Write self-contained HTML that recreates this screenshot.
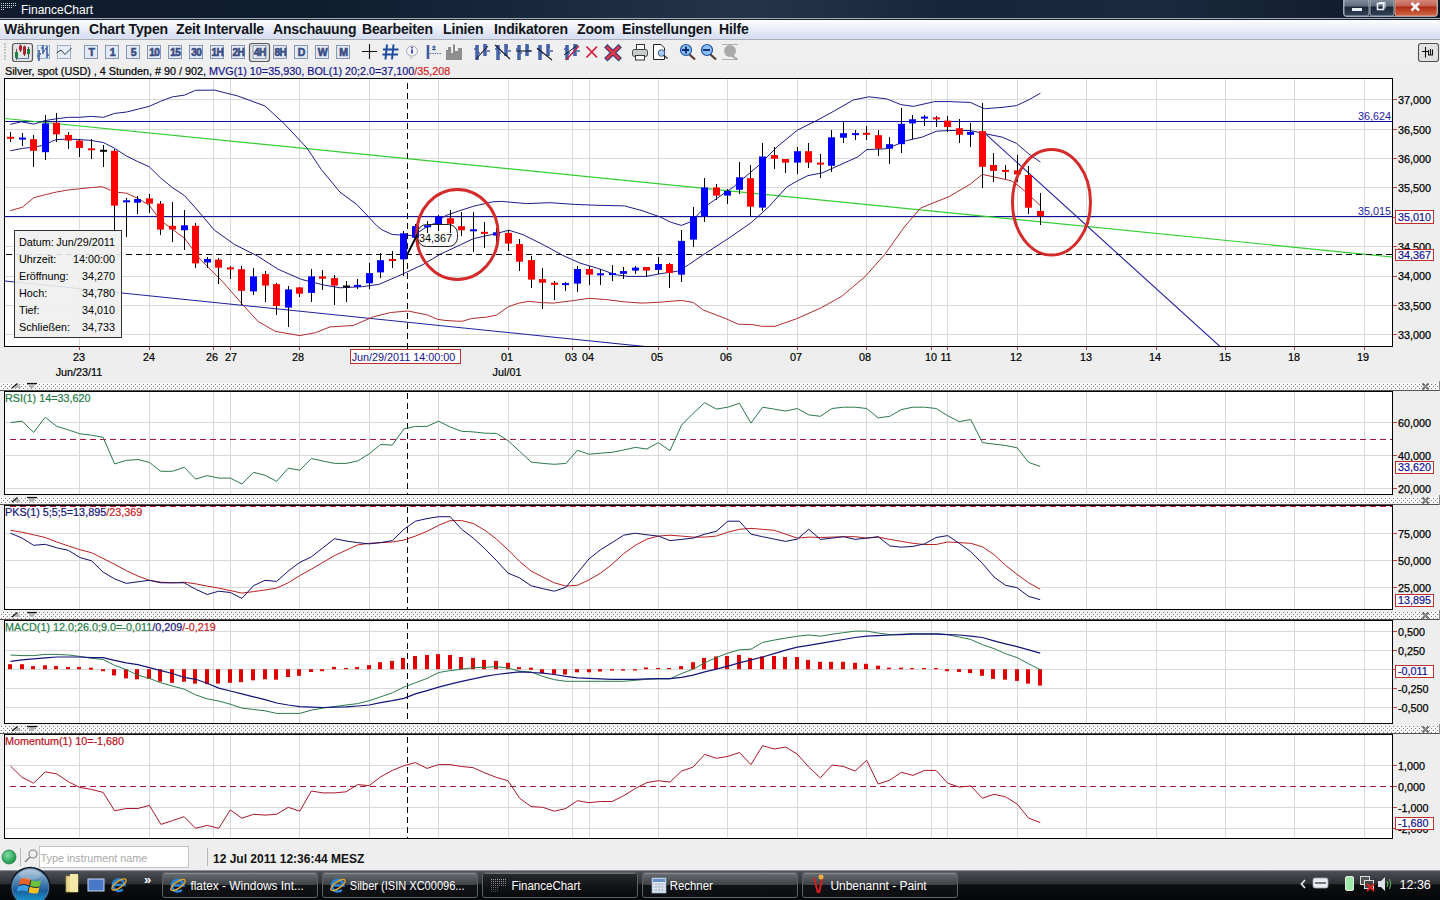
<!DOCTYPE html>
<html><head><meta charset="utf-8"><title>FinanceChart</title>
<style>
html,body{margin:0;padding:0;width:1440px;height:900px;overflow:hidden;background:#eeeeee;font-family:"Liberation Sans",sans-serif;}
.abs{position:absolute;}
#title{left:0;top:0;width:1440px;height:18px;background:linear-gradient(90deg,#0f1c2e 0%,#0f1d30 22%,#1a2a3f 40%,#24344a 52%,#16263a 66%,#1a2a3e 80%,#0d1828 100%);}
#title .t{position:absolute;left:21px;top:3px;color:#fff;font-size:12px;}
#tline{left:0;top:18px;width:1440px;height:1px;background:#a2aab4;border-bottom:1px solid #1a2230;}
#menu{left:0;top:20px;width:1440px;height:19px;background:linear-gradient(180deg,#fbfcfe 0%,#eef1f8 40%,#dde3f4 75%,#d8def2 100%);border-bottom:1px solid #a8adb6;}
#menu span{position:absolute;top:0.5px;font-size:14px;letter-spacing:-0.15px;font-weight:bold;color:#101418;}
#tool{left:0;top:40px;width:1440px;height:24px;background:#efefef;}
#info{left:5px;top:65px;font-size:10.8px;color:#000;white-space:nowrap;-webkit-text-stroke:0.2px;}
#status{left:0;top:839px;width:1440px;height:31px;background:#eeeeee;}
#taskbar{left:0;top:870px;width:1440px;height:30px;background:linear-gradient(180deg,#5a5e63 0%,#3a3d41 8%,#25282c 45%,#07080a 55%,#050608 100%);}
</style></head><body>
<div id="title" class="abs"><span class="t">FinanceChart</span></div>
<div id="tline" class="abs"></div>
<div id="menu" class="abs">
<span style="left:4px">Währungen</span><span style="left:89px">Chart Typen</span><span style="left:176px">Zeit Intervalle</span><span style="left:273px">Anschauung</span><span style="left:362px">Bearbeiten</span><span style="left:443px">Linien</span><span style="left:494px">Indikatoren</span><span style="left:577px">Zoom</span><span style="left:622px">Einstellungen</span><span style="left:719px">Hilfe</span>
</div>
<div id="tool" class="abs"></div>
<div id="info" class="abs">Silver, spot (USD) , 4 Stunden, # 90 / 902, <span style="color:#14148a">MVG(1) 10=35,930, BOL(1) 20;2.0=37,100</span><span style="color:#d02020">/35,208</span></div>
<div id="status" class="abs"></div>
<div id="taskbar" class="abs"></div>
<svg width="1440" height="900" viewBox="0 0 1440 900" style="position:absolute;left:0;top:0" font-family='"Liberation Sans", sans-serif'>
<defs><pattern id="dots" x="0" y="0" width="4" height="4" patternUnits="userSpaceOnUse"><rect width="4" height="4" fill="#f7f7f7"/><rect x="3" y="0" width="1" height="1" fill="#7a7a7a"/><rect x="1" y="2" width="1" height="1" fill="#7a7a7a"/></pattern><clipPath id="cmain"><rect x="5" y="79" width="1387" height="267"/></clipPath><clipPath id="crsi"><rect x="5" y="392" width="1387" height="102"/></clipPath><clipPath id="cpks"><rect x="5" y="506" width="1387" height="103"/></clipPath><clipPath id="cmacd"><rect x="5" y="621" width="1387" height="102"/></clipPath><clipPath id="cmom"><rect x="5" y="735" width="1387" height="103"/></clipPath></defs>
<rect x="4" y="78" width="1389" height="269" fill="#fff"/>
<path d="M79.5 79 V346 M149.5 79 V346 M213.5 79 V346 M230.5 79 V346 M299.5 79 V346 M369.5 79 V346 M438.5 79 V346 M508.5 79 V346 M572.5 79 V346 M589.5 79 V346 M658.5 79 V346 M727.5 79 V346 M797.5 79 V346 M866.5 79 V346 M931.5 79 V346 M947.5 79 V346 M1017.5 79 V346 M1086.5 79 V346 M1156.5 79 V346 M1225.5 79 V346 M1294.5 79 V346 M1364.5 79 V346 M5 99.5 H1392 M5 129.5 H1392 M5 158.5 H1392 M5 187.5 H1392 M5 217.5 H1392 M5 246.5 H1392 M5 276.5 H1392 M5 305.5 H1392 M5 334.5 H1392" stroke="#d9d9d9" stroke-width="1" fill="none" shape-rendering="crispEdges"/>
<g clip-path="url(#cmain)">
<path d="M5 121.5 H1392 M5 216.5 H1392" stroke="#1010a0" stroke-width="1.2" shape-rendering="crispEdges"/>
<path d="M5 118.5 L1392 257" stroke="#30d030" stroke-width="1.2" fill="none"/>
<path d="M5 281 L645 346.5" stroke="#2020a0" stroke-width="1.1" fill="none"/>
<path d="M982.5 131.2 L1220 346.5" stroke="#2020a0" stroke-width="1.1" fill="none"/>
<polyline points="10.3,124.4 21.3,121.8 33.8,124.1 45.3,120.5 56.5,118.8 68.4,117.3 79.5,117.3 91.2,116.4 103.5,117.3 114.7,113.4 126.6,112.0 137.4,109.3 149.3,106.3 160.5,101.3 172.4,96.9 184.5,95.1 195.6,90.3 214.4,90.1 237.5,95.9 265.0,106.0 283.8,123.3 306.9,147.9 321.3,169.5 340.0,192.2 356.7,204.4 367.8,216.1 376.7,225.6 382.2,230.0 392.2,234.4 400.0,235.0 413.3,235.6 423.3,228.9 434.4,223.3 445.6,215.6 460.0,210.6 473.3,206.3 492.9,201.8 501.4,201.4 526.7,203.6 549.8,202.7 574.7,204.4 597.8,205.3 624.4,205.9 642.2,210.7 660.0,216.9 670.7,222.2 681.3,225.4 692.0,221.3 704.9,206.7 733.3,187.1 758.2,165.8 777.8,146.2 797.3,130.2 816.9,120.4 834.7,110.7 853.3,100.0 868.9,96.8 886.7,98.9 900.9,104.6 913.3,106.4 934.7,101.6 948.9,101.6 970.2,102.4 984.4,108.7 1002.2,107.4 1016.4,105.6 1028.9,99.8 1040.4,93.2" fill="none" stroke="#1c1c88" stroke-width="1"/>
<polyline points="10.3,150.8 22.6,148.4 33.4,147.2 45.3,144.9 51.6,141.3 56.5,139.6 68.4,139.0 79.5,139.6 91.2,140.4 103.5,142.6 114.7,148.4 126.6,156.1 137.4,161.4 149.3,166.8 160.5,177.8 172.4,187.6 184.5,195.6 195.6,208.0 214.4,230.2 234.7,244.6 257.8,256.2 278.0,269.2 301.1,279.3 324.2,285.1 340.0,287.8 362.2,286.7 378.9,284.4 395.6,277.2 406.7,272.2 423.3,264.4 440.0,254.4 460.0,245.0 473.3,238.7 495.3,233.8 508.9,230.2 523.1,234.7 544.4,245.3 562.2,255.1 580.0,263.1 597.8,268.4 615.6,274.7 628.0,276.4 645.8,276.4 660.0,273.8 677.8,271.1 688.4,264.9 700.0,256.9 728.0,238.7 751.1,222.7 768.9,206.7 786.7,187.1 797.3,180.9 808.0,175.6 822.2,172.9 840.0,164.9 857.8,156.9 866.7,149.6 886.7,148.7 906.2,140.7 922.2,137.1 936.4,131.2 948.9,130.5 970.2,130.5 984.4,133.6 1002.2,137.1 1016.4,143.3 1028.9,154.0 1040.4,162.0" fill="none" stroke="#1c1c88" stroke-width="1"/>
<polyline points="10.3,210.7 22.6,207.1 33.8,197.7 45.3,194.7 56.5,192.0 68.4,189.9 79.5,188.8 91.2,187.6 102.2,186.7 114.7,192.0 126.6,193.2 137.4,198.2 149.3,205.3 160.5,220.4 172.4,229.3 184.5,238.2 200.0,259.1 223.1,282.2 243.3,305.3 257.8,321.2 275.1,331.3 299.6,335.6 315.5,332.7 330.0,326.9 353.1,325.5 373.3,316.8 390.6,312.5 408.0,311.0 427.5,315.0 437.5,319.3 445.0,320.4 456.7,321.2 462.5,321.2 471.7,318.5 486.7,317.1 496.7,315.0 508.3,306.7 518.3,303.3 528.3,301.3 540.0,302.5 553.3,303.1 574.7,300.4 588.9,298.3 606.7,299.6 624.4,301.9 642.2,303.1 660.0,302.2 681.3,300.4 693.3,302.5 703.3,310.0 725.0,318.3 738.3,324.2 753.3,324.7 761.7,326.3 775.0,326.3 796.7,318.7 821.7,307.5 841.7,296.3 865.0,276.7 885.0,254.2 904.4,226.9 920.4,208.2 931.1,203.8 948.9,196.7 970.2,184.2 982.3,174.4 1011.1,180.7 1020.0,186.9 1040.4,205.6" fill="none" stroke="#b02c2c" stroke-width="1"/>
<path d="M407.5 83 V346 M6 254.5 H1392" stroke="#000" stroke-width="1" stroke-dasharray="6,4" shape-rendering="crispEdges"/>
<path d="M10.5 132.0 V142.0 M22.5 133.4 V146.4 M33.5 134.9 V167.2 M45.5 114.7 V160.3 M56.5 113.2 V142.0 M68.5 132.0 V149.3 M79.5 139.2 V157.4 M91.5 139.2 V159.4 M103.5 145.0 V166.6 M114.5 149.3 V231.6 M126.5 197.8 V237.4 M137.5 195.5 V214.3 M149.5 194.0 V213.4 M160.5 201.3 V234.5 M172.5 201.9 V242.3 M184.5 210.0 V250.4 M195.5 223.0 V268.3 M207.5 256.7 V267.7 M218.5 257.6 V284.0 M230.5 266.0 V279.3 M241.5 266.3 V305.3 M253.5 267.7 V295.2 M265.5 271.2 V301.8 M276.5 282.7 V315.4 M288.5 285.6 V326.9 M299.5 286.5 V297.2 M311.5 269.2 V301.8 M322.5 270.0 V290.3 M334.5 275.0 V304.7 M346.5 280.7 V301.8 M357.5 279.3 V289.4 M369.5 263.3 V288.9 M380.5 253.3 V277.8 M392.5 250.6 V267.8 M403.5 230.6 V275.6 M415.5 224.0 V238.0 M427.5 221.1 V232.8 M438.5 215.4 V231.3 M450.5 210.0 V232.8 M461.5 212.0 V235.6 M473.5 212.0 V251.5 M484.5 222.2 V248.4 M496.5 228.3 V243.5 M508.5 230.1 V250.8 M519.5 239.1 V270.6 M531.5 256.0 V287.6 M542.5 268.1 V309.3 M554.5 280.5 V299.6 M565.5 282.3 V290.7 M577.5 266.3 V291.6 M589.5 266.3 V285.3 M600.5 269.3 V285.3 M612.5 265.2 V280.9 M623.5 267.0 V278.8 M635.5 266.0 V274.0 M646.5 266.7 V277.3 M658.5 256.9 V274.1 M669.5 263.1 V287.6 M681.5 230.2 V281.8 M693.5 207.1 V246.8 M704.5 177.9 V221.8 M716.5 183.9 V199.9 M727.5 189.2 V204.0 M739.5 162.2 V193.9 M750.5 165.4 V216.4 M762.5 143.0 V210.6 M774.5 147.1 V169.0 M785.5 159.0 V172.9 M797.5 147.1 V173.8 M808.5 143.0 V167.6 M820.5 154.2 V178.2 M831.5 129.9 V172.0 M843.5 121.3 V142.7 M855.5 130.2 V139.5 M866.5 126.3 V139.5 M878.5 130.1 V155.6 M889.5 137.1 V163.8 M901.5 107.8 V152.6 M912.5 114.9 V138.9 M924.5 115.2 V125.6 M936.5 115.8 V127.3 M947.5 115.8 V131.8 M959.5 118.8 V143.0 M970.5 122.9 V146.9 M982.5 102.8 V187.8 M993.5 153.1 V182.1 M1005.5 165.0 V178.9 M1017.5 154.9 V182.4 M1028.5 166.1 V214.4 M1040.5 192.8 V224.8" stroke="#000" stroke-width="1" shape-rendering="crispEdges"/>
<rect x="7" y="136.8" width="7" height="2" fill="#ff0000"/><rect x="19" y="137.6" width="7" height="2" fill="#0000ff"/><rect x="30" y="139.2" width="7" height="11.6" fill="#ff0000"/><rect x="42" y="123.3" width="7" height="28.9" fill="#0000ff"/><rect x="53" y="122.7" width="7" height="11.6" fill="#ff0000"/><rect x="65" y="134.9" width="7" height="5.7" fill="#ff0000"/><rect x="76" y="140.6" width="7" height="7.3" fill="#ff0000"/><rect x="88" y="148.3" width="7" height="2" fill="#ff0000"/><rect x="100" y="149.8" width="7" height="2" fill="#000000"/><rect x="111" y="150.8" width="7" height="54.8" fill="#ff0000"/><rect x="123" y="200.3" width="7" height="2" fill="#0000ff"/><rect x="134" y="199.0" width="7" height="3.7" fill="#0000ff"/><rect x="146" y="198.4" width="7" height="5.2" fill="#ff0000"/><rect x="157" y="203.6" width="7" height="26.0" fill="#ff0000"/><rect x="169" y="225.8" width="7" height="3.8" fill="#ff0000"/><rect x="181" y="225.3" width="7" height="4.9" fill="#0000ff"/><rect x="192" y="225.8" width="7" height="37.6" fill="#ff0000"/><rect x="204" y="259.0" width="7" height="3.5" fill="#0000ff"/><rect x="215" y="259.6" width="7" height="8.1" fill="#ff0000"/><rect x="227" y="267.4" width="7" height="2" fill="#ff0000"/><rect x="238" y="269.2" width="7" height="21.6" fill="#ff0000"/><rect x="250" y="276.4" width="7" height="15.0" fill="#0000ff"/><rect x="262" y="274.1" width="7" height="11.5" fill="#ff0000"/><rect x="273" y="284.2" width="7" height="21.9" fill="#ff0000"/><rect x="285" y="289.4" width="7" height="18.2" fill="#0000ff"/><rect x="296" y="287.4" width="7" height="6.3" fill="#ff0000"/><rect x="308" y="276.4" width="7" height="16.5" fill="#0000ff"/><rect x="319" y="276.4" width="7" height="2.3" fill="#ff0000"/><rect x="331" y="278.1" width="7" height="7.5" fill="#ff0000"/><rect x="343" y="285.5" width="7" height="2" fill="#000000"/><rect x="354" y="284.9" width="7" height="2" fill="#0000ff"/><rect x="366" y="273.1" width="7" height="10.2" fill="#0000ff"/><rect x="377" y="260.2" width="7" height="12.2" fill="#0000ff"/><rect x="389" y="259.0" width="7" height="2" fill="#ff0000"/><rect x="400" y="233.3" width="7" height="26.1" fill="#0000ff"/><rect x="412" y="226.1" width="7" height="11.7" fill="#0000ff"/><rect x="424" y="225.3" width="7" height="2" fill="#0000ff"/><rect x="435" y="216.5" width="7" height="8.5" fill="#0000ff"/><rect x="447" y="218.2" width="7" height="5.6" fill="#ff0000"/><rect x="458" y="226.2" width="7" height="4.1" fill="#ff0000"/><rect x="470" y="229.3" width="7" height="2" fill="#0000ff"/><rect x="481" y="231.8" width="7" height="2" fill="#ff0000"/><rect x="493" y="232.3" width="7" height="3.3" fill="#0000ff"/><rect x="505" y="232.9" width="7" height="10.7" fill="#ff0000"/><rect x="516" y="244.1" width="7" height="17.6" fill="#ff0000"/><rect x="528" y="260.1" width="7" height="19.5" fill="#ff0000"/><rect x="539" y="279.1" width="7" height="3.6" fill="#ff0000"/><rect x="551" y="282.7" width="7" height="2.1" fill="#ff0000"/><rect x="562" y="283.1" width="7" height="2" fill="#0000ff"/><rect x="574" y="269.0" width="7" height="14.6" fill="#0000ff"/><rect x="586" y="269.0" width="7" height="5.7" fill="#ff0000"/><rect x="597" y="273.3" width="7" height="2" fill="#0000ff"/><rect x="609" y="273.1" width="7" height="2" fill="#0000ff"/><rect x="620" y="271.1" width="7" height="2.7" fill="#0000ff"/><rect x="632" y="267.6" width="7" height="3.0" fill="#0000ff"/><rect x="643" y="267.0" width="7" height="3.6" fill="#ff0000"/><rect x="655" y="264.0" width="7" height="5.9" fill="#0000ff"/><rect x="666" y="264.0" width="7" height="8.9" fill="#ff0000"/><rect x="678" y="240.9" width="7" height="33.8" fill="#0000ff"/><rect x="690" y="216.5" width="7" height="23.1" fill="#0000ff"/><rect x="701" y="187.5" width="7" height="28.9" fill="#0000ff"/><rect x="713" y="187.5" width="7" height="8.1" fill="#ff0000"/><rect x="724" y="191.0" width="7" height="4.6" fill="#0000ff"/><rect x="736" y="177.3" width="7" height="12.5" fill="#0000ff"/><rect x="747" y="178.2" width="7" height="28.5" fill="#ff0000"/><rect x="759" y="156.5" width="7" height="51.1" fill="#0000ff"/><rect x="771" y="155.1" width="7" height="3.6" fill="#ff0000"/><rect x="782" y="159.0" width="7" height="3.6" fill="#ff0000"/><rect x="794" y="151.2" width="7" height="11.4" fill="#0000ff"/><rect x="805" y="151.2" width="7" height="11.4" fill="#ff0000"/><rect x="817" y="162.6" width="7" height="2" fill="#ff0000"/><rect x="828" y="137.3" width="7" height="28.5" fill="#0000ff"/><rect x="840" y="133.2" width="7" height="4.5" fill="#0000ff"/><rect x="852" y="133.1" width="7" height="2" fill="#0000ff"/><rect x="863" y="132.8" width="7" height="2" fill="#ff0000"/><rect x="875" y="135.2" width="7" height="13.5" fill="#ff0000"/><rect x="886" y="144.2" width="7" height="4.5" fill="#0000ff"/><rect x="898" y="123.8" width="7" height="20.4" fill="#0000ff"/><rect x="909" y="119.3" width="7" height="4.1" fill="#0000ff"/><rect x="921" y="116.6" width="7" height="2" fill="#0000ff"/><rect x="933" y="117.4" width="7" height="2" fill="#ff0000"/><rect x="944" y="120.6" width="7" height="6.4" fill="#ff0000"/><rect x="956" y="128.2" width="7" height="6.6" fill="#ff0000"/><rect x="967" y="131.8" width="7" height="3.0" fill="#0000ff"/><rect x="979" y="131.2" width="7" height="35.6" fill="#ff0000"/><rect x="990" y="165.0" width="7" height="5.9" fill="#ff0000"/><rect x="1002" y="169.9" width="7" height="2" fill="#ff0000"/><rect x="1014" y="170.4" width="7" height="4.0" fill="#ff0000"/><rect x="1025" y="175.0" width="7" height="32.7" fill="#ff0000"/><rect x="1037" y="210.9" width="7" height="5.3" fill="#ff0000"/>
<ellipse cx="457.4" cy="234.4" rx="40.8" ry="45" fill="none" stroke="#d42a2a" stroke-width="3"/>
<ellipse cx="1051.5" cy="202.2" rx="39" ry="52.8" fill="none" stroke="#d42a2a" stroke-width="3"/>
<path d="M407.5 254 L417.5 234" stroke="#000" stroke-width="1.8"/>
<rect x="417.5" y="224.5" width="40" height="22" rx="9" fill="none" stroke="#222" stroke-width="1"/>
<text x="419" y="242" font-size="10.8" fill="#000">34,367</text>
<text x="1391" y="120" font-size="10.8" fill="#1a1aa0" text-anchor="end">36,624</text>
<text x="1391" y="215" font-size="10.8" fill="#1a1aa0" text-anchor="end">35,015</text>
<rect x="14.5" y="230.5" width="107" height="107" fill="#f0f0f0" fill-opacity="0.9" stroke="#333" stroke-width="1" shape-rendering="crispEdges"/>
<text x="19" y="245.5" font-size="10.8" fill="#000">Datum:</text>
<text x="115" y="245.5" font-size="10.8" fill="#000" text-anchor="end">Jun/29/2011</text>
<text x="19" y="262.5" font-size="10.8" fill="#000">Uhrzeit:</text>
<text x="115" y="262.5" font-size="10.8" fill="#000" text-anchor="end">14:00:00</text>
<text x="19" y="279.5" font-size="10.8" fill="#000">Eröffnung:</text>
<text x="115" y="279.5" font-size="10.8" fill="#000" text-anchor="end">34,270</text>
<text x="19" y="296.5" font-size="10.8" fill="#000">Hoch:</text>
<text x="115" y="296.5" font-size="10.8" fill="#000" text-anchor="end">34,780</text>
<text x="19" y="313.5" font-size="10.8" fill="#000">Tief:</text>
<text x="115" y="313.5" font-size="10.8" fill="#000" text-anchor="end">34,010</text>
<text x="19" y="330.5" font-size="10.8" fill="#000">Schließen:</text>
<text x="115" y="330.5" font-size="10.8" fill="#000" text-anchor="end">34,733</text>
</g>
<rect x="4.5" y="78.5" width="1388" height="268" fill="none" stroke="#000" stroke-width="1" shape-rendering="crispEdges"/>
<path d="M1393 99.5 h4 M1393 129.5 h4 M1393 158.5 h4 M1393 187.5 h4 M1393 217.5 h4 M1393 246.5 h4 M1393 276.5 h4 M1393 305.5 h4 M1393 334.5 h4" stroke="#c04040" stroke-width="1" shape-rendering="crispEdges"/>
<text x="1398" y="104.2" font-size="10.8" fill="#000" stroke="#000" stroke-width="0.25">37,000</text>
<text x="1398" y="133.6" font-size="10.8" fill="#000" stroke="#000" stroke-width="0.25">36,500</text>
<text x="1398" y="162.9" font-size="10.8" fill="#000" stroke="#000" stroke-width="0.25">36,000</text>
<text x="1398" y="192.2" font-size="10.8" fill="#000" stroke="#000" stroke-width="0.25">35,500</text>
<text x="1398" y="251.0" font-size="10.8" fill="#000" stroke="#000" stroke-width="0.25">34,500</text>
<text x="1398" y="280.3" font-size="10.8" fill="#000" stroke="#000" stroke-width="0.25">34,000</text>
<text x="1398" y="309.7" font-size="10.8" fill="#000" stroke="#000" stroke-width="0.25">33,500</text>
<text x="1398" y="339.0" font-size="10.8" fill="#000" stroke="#000" stroke-width="0.25">33,000</text>
<rect x="1395.5" y="210.5" width="38" height="12.5" fill="#fff" stroke="#c03030" stroke-width="1" shape-rendering="crispEdges"/>
<text x="1398" y="220.6" font-size="10.8" fill="#101090" stroke="#101090" stroke-width="0.2">35,010</text>
<rect x="1395.5" y="249.0" width="38" height="11.5" fill="#fff" stroke="#c03030" stroke-width="1" shape-rendering="crispEdges"/>
<text x="1398" y="258.6" font-size="10.8" fill="#101090" stroke="#101090" stroke-width="0.2">34,367</text>
<path d="M79.5 347 v3 M149.5 347 v3 M213.5 347 v3 M230.5 347 v3 M299.5 347 v3 M369.5 347 v3 M438.5 347 v3 M508.5 347 v3 M572.5 347 v3 M589.5 347 v3 M658.5 347 v3 M727.5 347 v3 M797.5 347 v3 M866.5 347 v3 M931.5 347 v3 M947.5 347 v3 M1017.5 347 v3 M1086.5 347 v3 M1156.5 347 v3 M1225.5 347 v3 M1294.5 347 v3 M1364.5 347 v3" stroke="#a04040" stroke-width="1" shape-rendering="crispEdges"/>
<path d="M407.5 347 v3" stroke="#000" stroke-width="1"/>
<text x="79.0" y="360.8" font-size="10.8" fill="#000" stroke="#000" stroke-width="0.2" text-anchor="middle">23</text>
<text x="149.0" y="360.8" font-size="10.8" fill="#000" stroke="#000" stroke-width="0.2" text-anchor="middle">24</text>
<text x="212.0" y="360.8" font-size="10.8" fill="#000" stroke="#000" stroke-width="0.2" text-anchor="middle">26</text>
<text x="231.0" y="360.8" font-size="10.8" fill="#000" stroke="#000" stroke-width="0.2" text-anchor="middle">27</text>
<text x="298.0" y="360.8" font-size="10.8" fill="#000" stroke="#000" stroke-width="0.2" text-anchor="middle">28</text>
<text x="507.0" y="360.8" font-size="10.8" fill="#000" stroke="#000" stroke-width="0.2" text-anchor="middle">01</text>
<text x="571.0" y="360.8" font-size="10.8" fill="#000" stroke="#000" stroke-width="0.2" text-anchor="middle">03</text>
<text x="588.0" y="360.8" font-size="10.8" fill="#000" stroke="#000" stroke-width="0.2" text-anchor="middle">04</text>
<text x="657.0" y="360.8" font-size="10.8" fill="#000" stroke="#000" stroke-width="0.2" text-anchor="middle">05</text>
<text x="726.0" y="360.8" font-size="10.8" fill="#000" stroke="#000" stroke-width="0.2" text-anchor="middle">06</text>
<text x="796.0" y="360.8" font-size="10.8" fill="#000" stroke="#000" stroke-width="0.2" text-anchor="middle">07</text>
<text x="865.0" y="360.8" font-size="10.8" fill="#000" stroke="#000" stroke-width="0.2" text-anchor="middle">08</text>
<text x="931.0" y="360.8" font-size="10.8" fill="#000" stroke="#000" stroke-width="0.2" text-anchor="middle">10</text>
<text x="946.0" y="360.8" font-size="10.8" fill="#000" stroke="#000" stroke-width="0.2" text-anchor="middle">11</text>
<text x="1016.0" y="360.8" font-size="10.8" fill="#000" stroke="#000" stroke-width="0.2" text-anchor="middle">12</text>
<text x="1086.0" y="360.8" font-size="10.8" fill="#000" stroke="#000" stroke-width="0.2" text-anchor="middle">13</text>
<text x="1155.0" y="360.8" font-size="10.8" fill="#000" stroke="#000" stroke-width="0.2" text-anchor="middle">14</text>
<text x="1225.0" y="360.8" font-size="10.8" fill="#000" stroke="#000" stroke-width="0.2" text-anchor="middle">15</text>
<text x="1294.0" y="360.8" font-size="10.8" fill="#000" stroke="#000" stroke-width="0.2" text-anchor="middle">18</text>
<text x="1363.0" y="360.8" font-size="10.8" fill="#000" stroke="#000" stroke-width="0.2" text-anchor="middle">19</text>
<text x="79" y="375.8" font-size="10.8" fill="#000" stroke="#000" stroke-width="0.2" text-anchor="middle">Jun/23/11</text>
<text x="507" y="375.8" font-size="10.8" fill="#000" stroke="#000" stroke-width="0.2" text-anchor="middle">Jul/01</text>
<rect x="350.5" y="349.5" width="110" height="14" fill="#fff" stroke="#c03030" stroke-width="1"/>
<text x="403.5" y="361" font-size="10.8" fill="#14148a" text-anchor="middle">Jun/29/2011 14:00:00</text>
<rect x="0" y="383" width="1440" height="7" fill="url(#dots)"/>
<path d="M0 390.5 H1440" stroke="#5a5050" stroke-width="1" shape-rendering="crispEdges"/>
<path d="M14 388 L18 384 L21 388 Z" fill="#b4b4b4"/><path d="M12 388.0 L17.5 383.5" stroke="#111" stroke-width="1.2"/>
<path d="M28 384 H36 L33 388 H30 Z" fill="#b4b4b4"/><path d="M27 383.5 H37" stroke="#111" stroke-width="1.2"/>
<rect x="1422" y="383" width="7" height="7" fill="#f7f7f7"/><path d="M1422.5 383.5 L1428.5 389.5 M1428.5 383.5 L1422.5 389.5" stroke="#666" stroke-width="2"/><rect x="1424" y="385.0" width="3" height="3" fill="#888"/>
<path d="M1439.5 381 V391" stroke="#888" stroke-width="1"/>
<rect x="4" y="391" width="1389" height="104" fill="#fff"/>
<path d="M79.5 392 V494 M149.5 392 V494 M213.5 392 V494 M230.5 392 V494 M299.5 392 V494 M369.5 392 V494 M438.5 392 V494 M508.5 392 V494 M572.5 392 V494 M589.5 392 V494 M658.5 392 V494 M727.5 392 V494 M797.5 392 V494 M866.5 392 V494 M931.5 392 V494 M947.5 392 V494 M1017.5 392 V494 M1086.5 392 V494 M1156.5 392 V494 M1225.5 392 V494 M1294.5 392 V494 M1364.5 392 V494 M5 422.5 H1392 M5 455.5 H1392 M5 488.5 H1392" stroke="#d9d9d9" stroke-width="1" fill="none" shape-rendering="crispEdges"/>
<g clip-path="url(#crsi)">
<path d="M10 439.5 H1392" stroke="#a8183c" stroke-width="1.3" stroke-dasharray="6,4" shape-rendering="crispEdges"/>
<path d="M407.5 393 V494" stroke="#000" stroke-width="1" stroke-dasharray="6,4" shape-rendering="crispEdges"/>
<polyline points="10.5,422.5 22.1,421.2 33.6,432.4 45.2,417.3 56.8,426.4 68.3,429.9 79.9,433.8 91.5,435.2 103.1,437.3 114.6,463.9 126.2,460.4 137.8,459.5 149.3,462.4 160.9,471.3 172.5,471.3 184.1,467.2 195.6,479.1 207.2,475.6 218.8,478.1 230.3,478.1 241.9,484.0 253.5,472.3 265.0,475.2 276.6,481.4 288.2,468.2 299.8,470.2 311.3,458.5 322.9,461.0 334.5,463.4 346.0,463.4 357.6,461.0 369.2,453.8 380.7,444.5 392.3,445.1 403.9,428.9 415.4,426.4 427.0,426.4 438.6,421.2 450.2,427.0 461.7,431.3 473.3,431.9 484.9,433.2 496.4,433.4 508.0,440.6 519.6,451.3 531.1,462.0 542.7,463.4 554.3,464.3 565.9,463.4 577.4,450.3 589.0,454.2 600.6,453.2 612.1,452.3 623.7,450.0 635.3,447.4 646.9,449.0 658.4,442.6 670.0,450.7 681.6,425.1 693.1,413.4 704.7,402.7 716.3,409.1 727.8,407.2 739.4,403.3 751.0,423.1 762.6,407.2 774.1,409.1 785.7,411.1 797.3,408.5 808.8,414.9 820.4,416.3 832.0,408.5 843.5,407.2 855.1,407.2 866.7,408.5 878.2,417.9 889.8,416.3 901.4,409.5 913.0,407.2 924.5,407.2 936.1,408.5 947.7,415.7 959.2,421.6 970.8,419.6 982.4,442.6 994.0,444.1 1005.5,445.5 1017.1,447.8 1028.7,462.4 1040.2,466.5" fill="none" stroke="#2a7a4c" stroke-width="1"/>
<text x="5" y="402" font-size="10.8" fill="#1e7a44" stroke="#1e7a44" stroke-width="0.2">RSI(1) 14=33,620</text>
</g>
<rect x="4.5" y="391.5" width="1388" height="103" fill="none" stroke="#000" stroke-width="1" shape-rendering="crispEdges"/>
<path d="M1393 422.5 h4 M1393 455.5 h4 M1393 488.5 h4" stroke="#c04040" stroke-width="1" shape-rendering="crispEdges"/>
<text x="1398" y="426.8" font-size="10.8" fill="#000" stroke="#000" stroke-width="0.25">60,000</text>
<text x="1398" y="459.8" font-size="10.8" fill="#000" stroke="#000" stroke-width="0.25">40,000</text>
<text x="1398" y="492.8" font-size="10.8" fill="#000" stroke="#000" stroke-width="0.25">20,000</text>
<rect x="1395.5" y="461.0" width="38" height="12.0" fill="#fff" stroke="#c03030" stroke-width="1" shape-rendering="crispEdges"/>
<text x="1398" y="470.8" font-size="10.8" fill="#101090" stroke="#101090" stroke-width="0.2">33,620</text>
<rect x="0" y="497" width="1440" height="7" fill="url(#dots)"/>
<path d="M0 504.5 H1440" stroke="#5a5050" stroke-width="1" shape-rendering="crispEdges"/>
<path d="M14 502 L18 498 L21 502 Z" fill="#b4b4b4"/><path d="M12 502.0 L17.5 497.5" stroke="#111" stroke-width="1.2"/>
<path d="M28 498 H36 L33 502 H30 Z" fill="#b4b4b4"/><path d="M27 497.5 H37" stroke="#111" stroke-width="1.2"/>
<rect x="1422" y="497" width="7" height="7" fill="#f7f7f7"/><path d="M1422.5 497.5 L1428.5 503.5 M1428.5 497.5 L1422.5 503.5" stroke="#666" stroke-width="2"/><rect x="1424" y="499.0" width="3" height="3" fill="#888"/>
<path d="M1439.5 495 V505" stroke="#888" stroke-width="1"/>
<rect x="4" y="505" width="1389" height="105" fill="#fff"/>
<path d="M79.5 506 V609 M149.5 506 V609 M213.5 506 V609 M230.5 506 V609 M299.5 506 V609 M369.5 506 V609 M438.5 506 V609 M508.5 506 V609 M572.5 506 V609 M589.5 506 V609 M658.5 506 V609 M727.5 506 V609 M797.5 506 V609 M866.5 506 V609 M931.5 506 V609 M947.5 506 V609 M1017.5 506 V609 M1086.5 506 V609 M1156.5 506 V609 M1225.5 506 V609 M1294.5 506 V609 M1364.5 506 V609 M5 533.5 H1392 M5 560.5 H1392 M5 587.5 H1392" stroke="#d9d9d9" stroke-width="1" fill="none" shape-rendering="crispEdges"/>
<g clip-path="url(#cpks)">
<path d="M10 506.5 H1392" stroke="#b0183c" stroke-width="1.3" stroke-dasharray="6,4" shape-rendering="crispEdges"/>
<path d="M407.5 507 V609" stroke="#000" stroke-width="1" stroke-dasharray="6,4" shape-rendering="crispEdges"/>
<polyline points="10.5,530.3 22.1,532.2 33.6,534.8 45.2,537.5 56.8,542.0 68.3,545.9 79.9,549.7 91.5,552.7 103.1,558.5 114.6,564.3 126.2,570.6 137.8,576.0 149.3,580.3 160.9,582.2 172.5,582.8 184.1,582.2 195.6,583.8 207.2,586.1 218.8,588.1 230.3,590.6 241.9,593.1 253.5,591.6 265.0,590.0 276.6,588.1 288.2,582.8 299.8,575.6 311.3,569.2 322.9,562.4 334.5,555.6 346.0,550.3 357.6,544.9 369.2,543.3 380.7,542.6 392.3,542.0 403.9,540.0 415.4,536.1 427.0,531.3 438.6,525.4 450.2,520.6 461.7,520.6 473.3,523.5 484.9,530.3 496.4,539.1 508.0,549.7 519.6,561.4 531.1,571.1 542.7,577.0 554.3,582.8 565.9,586.1 577.4,585.3 589.0,579.9 600.6,573.1 612.1,564.3 623.7,553.6 635.3,545.3 646.9,539.1 658.4,536.1 670.0,535.2 681.6,536.1 693.1,537.1 704.7,537.1 716.3,536.1 727.8,532.2 739.4,529.3 751.0,528.4 762.6,529.3 774.1,530.3 785.7,534.2 797.3,538.1 808.8,537.1 820.4,537.5 832.0,537.1 843.5,536.7 855.1,536.7 866.7,538.1 878.2,537.1 889.8,539.4 901.4,541.4 913.0,543.3 924.5,544.5 936.1,544.5 947.7,542.0 959.2,542.6 970.8,543.3 982.4,546.8 994.0,554.6 1005.5,565.3 1017.1,574.4 1028.7,582.8 1040.2,589.2" fill="none" stroke="#b82020" stroke-width="1"/>
<polyline points="10.5,533.2 22.1,538.1 33.6,545.3 45.2,544.3 56.8,547.8 68.3,550.3 79.9,557.5 91.5,560.8 103.1,572.1 114.6,578.9 126.2,583.4 137.8,581.8 149.3,580.3 160.9,582.8 172.5,582.8 184.1,582.8 195.6,589.2 207.2,594.5 218.8,591.2 230.3,592.5 241.9,598.4 253.5,585.7 265.0,580.3 276.6,581.4 288.2,571.1 299.8,562.4 311.3,556.9 322.9,547.8 334.5,538.7 346.0,541.0 357.6,542.6 369.2,543.9 380.7,542.6 392.3,540.6 403.9,529.3 415.4,521.2 427.0,518.6 438.6,516.7 450.2,516.7 461.7,529.3 473.3,538.1 484.9,548.8 496.4,560.4 508.0,573.1 519.6,577.9 531.1,585.7 542.7,588.6 554.3,591.2 565.9,587.3 577.4,573.1 589.0,558.9 600.6,549.7 612.1,542.6 623.7,535.2 635.3,533.2 646.9,534.8 658.4,536.1 670.0,540.6 681.6,539.4 693.1,538.1 704.7,534.2 716.3,531.3 727.8,521.2 739.4,521.2 751.0,534.2 762.6,536.7 774.1,539.1 785.7,541.4 797.3,539.1 808.8,529.3 820.4,539.4 832.0,538.1 843.5,536.7 855.1,539.4 866.7,538.1 878.2,536.7 889.8,545.9 901.4,547.2 913.0,546.4 924.5,543.9 936.1,537.5 947.7,535.6 959.2,543.3 970.8,551.7 982.4,563.4 994.0,577.0 1005.5,585.3 1017.1,587.7 1028.7,596.4 1040.2,599.7" fill="none" stroke="#121270" stroke-width="1"/>
<text x="5" y="516" font-size="10.8" stroke-width="0.2"><tspan fill="#14147a" stroke="#14147a">PKS(1) 5;5;5=13,895</tspan><tspan fill="#c81c1c" stroke="#c81c1c">/23,369</tspan></text>
</g>
<rect x="4.5" y="505.5" width="1388" height="104" fill="none" stroke="#000" stroke-width="1" shape-rendering="crispEdges"/>
<path d="M1393 533.5 h4 M1393 560.5 h4 M1393 587.5 h4" stroke="#c04040" stroke-width="1" shape-rendering="crispEdges"/>
<text x="1398" y="537.8" font-size="10.8" fill="#000" stroke="#000" stroke-width="0.25">75,000</text>
<text x="1398" y="564.8" font-size="10.8" fill="#000" stroke="#000" stroke-width="0.25">50,000</text>
<text x="1398" y="591.8" font-size="10.8" fill="#000" stroke="#000" stroke-width="0.25">25,000</text>
<rect x="1395.5" y="594.0" width="38" height="12.0" fill="#fff" stroke="#c03030" stroke-width="1" shape-rendering="crispEdges"/>
<text x="1398" y="603.8" font-size="10.8" fill="#101090" stroke="#101090" stroke-width="0.2">13,895</text>
<rect x="0" y="612" width="1440" height="7" fill="url(#dots)"/>
<path d="M0 619.5 H1440" stroke="#5a5050" stroke-width="1" shape-rendering="crispEdges"/>
<path d="M14 617 L18 613 L21 617 Z" fill="#b4b4b4"/><path d="M12 617.0 L17.5 612.5" stroke="#111" stroke-width="1.2"/>
<path d="M28 613 H36 L33 617 H30 Z" fill="#b4b4b4"/><path d="M27 612.5 H37" stroke="#111" stroke-width="1.2"/>
<rect x="1422" y="612" width="7" height="7" fill="#f7f7f7"/><path d="M1422.5 612.5 L1428.5 618.5 M1428.5 612.5 L1422.5 618.5" stroke="#666" stroke-width="2"/><rect x="1424" y="614.0" width="3" height="3" fill="#888"/>
<path d="M1439.5 610 V620" stroke="#888" stroke-width="1"/>
<rect x="4" y="620" width="1389" height="104" fill="#fff"/>
<path d="M79.5 621 V723 M149.5 621 V723 M213.5 621 V723 M230.5 621 V723 M299.5 621 V723 M369.5 621 V723 M438.5 621 V723 M508.5 621 V723 M572.5 621 V723 M589.5 621 V723 M658.5 621 V723 M727.5 621 V723 M797.5 621 V723 M866.5 621 V723 M931.5 621 V723 M947.5 621 V723 M1017.5 621 V723 M1086.5 621 V723 M1156.5 621 V723 M1225.5 621 V723 M1294.5 621 V723 M1364.5 621 V723 M5 631.5 H1392 M5 650.5 H1392 M5 669.5 H1392 M5 688.5 H1392 M5 707.5 H1392" stroke="#d9d9d9" stroke-width="1" fill="none" shape-rendering="crispEdges"/>
<g clip-path="url(#cmacd)">
<path d="M407.5 623 V723" stroke="#000" stroke-width="1" stroke-dasharray="6,4" shape-rendering="crispEdges"/>
<g fill="#e00000"><rect x="8" y="664.2" width="4" height="5.0"/><rect x="20" y="664.2" width="4" height="5.0"/><rect x="31" y="666.1" width="4" height="3.1"/><rect x="43" y="665.3" width="4" height="3.9"/><rect x="54" y="666.1" width="4" height="3.1"/><rect x="66" y="667.1" width="4" height="2.1"/><rect x="77" y="667.1" width="4" height="2.1"/><rect x="89" y="667.7" width="4" height="2.0"/><rect x="101" y="669.2" width="4" height="2.0"/><rect x="112" y="669.2" width="4" height="6.2"/><rect x="124" y="669.2" width="4" height="9.2"/><rect x="135" y="669.2" width="4" height="10.1"/><rect x="147" y="669.2" width="4" height="9.8"/><rect x="158" y="669.2" width="4" height="12.5"/><rect x="170" y="669.2" width="4" height="13.6"/><rect x="182" y="669.2" width="4" height="12.5"/><rect x="193" y="669.2" width="4" height="14.4"/><rect x="205" y="669.2" width="4" height="15.0"/><rect x="216" y="669.2" width="4" height="14.4"/><rect x="228" y="669.2" width="4" height="13.6"/><rect x="239" y="669.2" width="4" height="13.0"/><rect x="251" y="669.2" width="4" height="11.1"/><rect x="263" y="669.2" width="4" height="10.1"/><rect x="274" y="669.2" width="4" height="10.5"/><rect x="286" y="669.2" width="4" height="7.8"/><rect x="297" y="669.2" width="4" height="6.6"/><rect x="309" y="669.2" width="4" height="2.8"/><rect x="320" y="669.2" width="4" height="2.0"/><rect x="332" y="666.9" width="4" height="2.3"/><rect x="344" y="668.0" width="4" height="1.2"/><rect x="355" y="667.1" width="4" height="2.1"/><rect x="367" y="665.1" width="4" height="4.1"/><rect x="378" y="662.2" width="4" height="7.0"/><rect x="390" y="660.9" width="4" height="8.3"/><rect x="401" y="657.9" width="4" height="11.3"/><rect x="413" y="656.0" width="4" height="13.2"/><rect x="425" y="655.0" width="4" height="14.2"/><rect x="436" y="654.1" width="4" height="15.1"/><rect x="448" y="655.0" width="4" height="14.2"/><rect x="459" y="657.0" width="4" height="12.2"/><rect x="471" y="657.9" width="4" height="11.3"/><rect x="482" y="659.9" width="4" height="9.3"/><rect x="494" y="660.9" width="4" height="8.3"/><rect x="506" y="662.8" width="4" height="6.4"/><rect x="517" y="667.1" width="4" height="2.1"/><rect x="529" y="667.7" width="4" height="2.0"/><rect x="540" y="669.2" width="4" height="3.9"/><rect x="552" y="669.2" width="4" height="4.7"/><rect x="563" y="669.2" width="4" height="5.3"/><rect x="575" y="669.2" width="4" height="3.1"/><rect x="587" y="669.2" width="4" height="3.1"/><rect x="598" y="669.2" width="4" height="2.3"/><rect x="610" y="669.2" width="4" height="1.4"/><rect x="621" y="669.2" width="4" height="1.4"/><rect x="633" y="669.2" width="4" height="1.3"/><rect x="644" y="667.5" width="4" height="1.7"/><rect x="656" y="668.0" width="4" height="1.2"/><rect x="667" y="668.0" width="4" height="1.2"/><rect x="679" y="666.1" width="4" height="3.1"/><rect x="691" y="662.2" width="4" height="7.0"/><rect x="702" y="657.9" width="4" height="11.3"/><rect x="714" y="656.4" width="4" height="12.8"/><rect x="725" y="656.0" width="4" height="13.2"/><rect x="737" y="655.0" width="4" height="14.2"/><rect x="748" y="657.9" width="4" height="11.3"/><rect x="760" y="656.4" width="4" height="12.8"/><rect x="772" y="656.0" width="4" height="13.2"/><rect x="783" y="657.0" width="4" height="12.2"/><rect x="795" y="657.0" width="4" height="12.2"/><rect x="806" y="659.9" width="4" height="9.3"/><rect x="818" y="661.8" width="4" height="7.4"/><rect x="829" y="661.8" width="4" height="7.4"/><rect x="841" y="661.8" width="4" height="7.4"/><rect x="853" y="662.8" width="4" height="6.4"/><rect x="864" y="663.8" width="4" height="5.4"/><rect x="876" y="665.7" width="4" height="3.5"/><rect x="887" y="667.7" width="4" height="1.5"/><rect x="899" y="667.7" width="4" height="1.5"/><rect x="910" y="668.0" width="4" height="1.2"/><rect x="922" y="668.0" width="4" height="1.2"/><rect x="934" y="668.0" width="4" height="1.2"/><rect x="945" y="669.2" width="4" height="2.0"/><rect x="957" y="669.2" width="4" height="2.7"/><rect x="968" y="669.2" width="4" height="3.9"/><rect x="980" y="669.2" width="4" height="6.6"/><rect x="991" y="669.2" width="4" height="9.7"/><rect x="1003" y="669.2" width="4" height="10.5"/><rect x="1015" y="669.2" width="4" height="11.7"/><rect x="1026" y="669.2" width="4" height="14.4"/><rect x="1038" y="669.2" width="4" height="16.4"/></g>
<polyline points="10.5,655.0 22.1,655.6 33.6,655.6 45.2,654.4 56.8,654.4 68.3,655.0 79.9,656.4 91.5,658.3 103.1,659.5 114.6,665.3 126.2,669.6 137.8,675.1 149.3,678.4 160.9,682.8 172.5,686.1 184.1,689.1 195.6,694.9 207.2,698.8 218.8,701.1 230.3,704.2 241.9,708.1 253.5,709.5 265.0,710.8 276.6,713.4 288.2,713.4 299.8,713.4 311.3,710.1 322.9,708.1 334.5,706.6 346.0,705.0 357.6,703.6 369.2,700.7 380.7,696.8 392.3,692.9 403.9,687.1 415.4,682.8 427.0,678.4 438.6,672.5 450.2,670.6 461.7,669.2 473.3,667.7 484.9,667.3 496.4,666.7 508.0,668.0 519.6,671.2 531.1,671.9 542.7,676.4 554.3,679.7 565.9,681.3 577.4,681.3 589.0,681.3 600.6,681.3 612.1,681.3 623.7,681.3 635.3,680.3 646.9,679.3 658.4,678.9 670.0,678.9 681.6,673.5 693.1,669.2 704.7,662.8 716.3,657.6 727.8,653.1 739.4,649.8 751.0,649.2 762.6,642.4 774.1,640.1 785.7,638.1 797.3,636.2 808.8,635.0 820.4,636.2 832.0,634.2 843.5,632.7 855.1,631.1 866.7,631.1 878.2,633.1 889.8,634.6 901.4,634.2 913.0,633.6 924.5,633.6 936.1,633.6 947.7,634.6 959.2,637.0 970.8,639.5 982.4,644.7 994.0,648.6 1005.5,653.7 1017.1,657.6 1028.7,663.8 1040.2,669.6" fill="none" stroke="#2a7a4c" stroke-width="1"/>
<polyline points="10.5,661.4 22.1,659.9 33.6,658.9 45.2,657.9 56.8,657.0 68.3,657.0 79.9,657.0 91.5,657.6 103.1,657.6 114.6,660.3 126.2,662.8 137.8,664.7 149.3,667.7 160.9,670.6 172.5,673.5 184.1,677.4 195.6,679.3 207.2,683.2 218.8,688.1 230.3,691.0 241.9,693.9 253.5,696.8 265.0,699.7 276.6,703.0 288.2,705.0 299.8,706.6 311.3,707.1 322.9,707.5 334.5,707.1 346.0,706.9 357.6,706.0 369.2,705.0 380.7,702.7 392.3,700.7 403.9,698.4 415.4,693.9 427.0,690.6 438.6,687.1 450.2,684.2 461.7,681.3 473.3,678.9 484.9,676.4 496.4,674.5 508.0,673.1 519.6,671.9 531.1,672.5 542.7,673.1 554.3,674.5 565.9,676.4 577.4,677.8 589.0,678.4 600.6,678.9 612.1,679.3 623.7,679.3 635.3,679.3 646.9,678.9 658.4,678.7 670.0,678.7 681.6,677.4 693.1,675.1 704.7,671.9 716.3,669.2 727.8,666.1 739.4,662.8 751.0,659.9 762.6,657.0 774.1,653.7 785.7,650.2 797.3,647.2 808.8,645.3 820.4,643.4 832.0,641.4 843.5,639.5 855.1,637.5 866.7,636.2 878.2,635.6 889.8,635.0 901.4,634.6 913.0,634.2 924.5,634.2 936.1,634.2 947.7,634.6 959.2,635.0 970.8,636.2 982.4,637.5 994.0,640.8 1005.5,643.9 1017.1,646.7 1028.7,649.8 1040.2,653.1" fill="none" stroke="#14147a" stroke-width="1.2"/>
<text x="5" y="631" font-size="10.8" stroke-width="0.2"><tspan fill="#1e7a44" stroke="#1e7a44">MACD(1) 12.0;26.0;9.0=-0,011</tspan><tspan fill="#14147a" stroke="#14147a">/0,209</tspan><tspan fill="#c81c1c" stroke="#c81c1c">/-0,219</tspan></text>
</g>
<rect x="4.5" y="620.5" width="1388" height="103" fill="none" stroke="#000" stroke-width="1" shape-rendering="crispEdges"/>
<path d="M1393 631.5 h4 M1393 650.5 h4 M1393 669.5 h4 M1393 688.5 h4 M1393 707.5 h4" stroke="#c04040" stroke-width="1" shape-rendering="crispEdges"/>
<text x="1398" y="635.8" font-size="10.8" fill="#000" stroke="#000" stroke-width="0.25">0,500</text>
<text x="1398" y="654.8" font-size="10.8" fill="#000" stroke="#000" stroke-width="0.25">0,250</text>
<text x="1398" y="692.8" font-size="10.8" fill="#000" stroke="#000" stroke-width="0.25">-0,250</text>
<text x="1398" y="711.8" font-size="10.8" fill="#000" stroke="#000" stroke-width="0.25">-0,500</text>
<rect x="1395.5" y="665.0" width="38" height="12.0" fill="#fff" stroke="#c03030" stroke-width="1" shape-rendering="crispEdges"/>
<text x="1398" y="674.8" font-size="10.8" fill="#101090" stroke="#101090" stroke-width="0.2">-0,011</text>
<rect x="0" y="726" width="1440" height="7" fill="url(#dots)"/>
<path d="M0 733.5 H1440" stroke="#5a5050" stroke-width="1" shape-rendering="crispEdges"/>
<path d="M14 731 L18 727 L21 731 Z" fill="#b4b4b4"/><path d="M12 731.0 L17.5 726.5" stroke="#111" stroke-width="1.2"/>
<path d="M28 727 H36 L33 731 H30 Z" fill="#b4b4b4"/><path d="M27 726.5 H37" stroke="#111" stroke-width="1.2"/>
<rect x="1422" y="726" width="7" height="7" fill="#f7f7f7"/><path d="M1422.5 726.5 L1428.5 732.5 M1428.5 726.5 L1422.5 732.5" stroke="#666" stroke-width="2"/><rect x="1424" y="728.0" width="3" height="3" fill="#888"/>
<path d="M1439.5 724 V734" stroke="#888" stroke-width="1"/>
<rect x="4" y="734" width="1389" height="105" fill="#fff"/>
<path d="M79.5 735 V838 M149.5 735 V838 M213.5 735 V838 M230.5 735 V838 M299.5 735 V838 M369.5 735 V838 M438.5 735 V838 M508.5 735 V838 M572.5 735 V838 M589.5 735 V838 M658.5 735 V838 M727.5 735 V838 M797.5 735 V838 M866.5 735 V838 M931.5 735 V838 M947.5 735 V838 M1017.5 735 V838 M1086.5 735 V838 M1156.5 735 V838 M1225.5 735 V838 M1294.5 735 V838 M1364.5 735 V838 M5 765.5 H1392 M5 807.5 H1392 M5 828.5 H1392" stroke="#d9d9d9" stroke-width="1" fill="none" shape-rendering="crispEdges"/>
<g clip-path="url(#cmom)">
<path d="M10 786.5 H1392" stroke="#a8183c" stroke-width="1.3" stroke-dasharray="6,4" shape-rendering="crispEdges"/>
<path d="M407.5 737 V838" stroke="#000" stroke-width="1" stroke-dasharray="6,4" shape-rendering="crispEdges"/>
<polyline points="10.5,766.1 22.1,777.4 33.6,783.2 45.2,771.9 56.8,773.9 68.3,781.7 79.9,787.5 91.5,789.4 103.1,792.4 114.6,810.8 126.2,808.5 137.8,808.5 149.3,805.4 160.9,824.4 172.5,820.6 184.1,816.7 195.6,828.3 207.2,825.4 218.8,828.3 230.3,809.9 241.9,818.2 253.5,814.3 265.0,815.1 276.6,814.3 288.2,807.3 299.8,811.2 311.3,791.0 322.9,792.9 334.5,792.9 346.0,791.8 357.6,784.6 369.2,785.6 380.7,776.8 392.3,770.4 403.9,765.7 415.4,762.6 427.0,768.4 438.6,764.6 450.2,764.6 461.7,766.5 473.3,767.7 484.9,772.9 496.4,777.4 508.0,780.7 519.6,798.2 531.1,806.6 542.7,807.3 554.3,811.2 565.9,808.5 577.4,800.7 589.0,802.7 600.6,801.5 612.1,801.5 623.7,795.7 635.3,788.5 646.9,782.6 658.4,780.7 670.0,782.1 681.6,771.0 693.1,767.1 704.7,754.4 716.3,758.3 727.8,756.4 739.4,752.5 751.0,764.6 762.6,745.7 774.1,749.0 785.7,747.1 797.3,754.1 808.8,767.1 820.4,777.8 832.0,765.1 843.5,766.5 855.1,771.0 866.7,760.3 878.2,784.0 889.8,780.1 901.4,772.3 913.0,775.4 924.5,770.4 936.1,770.4 947.7,783.2 959.2,787.1 970.8,785.9 982.4,798.2 994.0,794.3 1005.5,796.8 1017.1,804.0 1028.7,818.2 1040.2,822.5" fill="none" stroke="#a81828" stroke-width="1"/>
<text x="5" y="745" font-size="10.8" fill="#b81020" stroke="#b81020" stroke-width="0.2">Momentum(1) 10=-1,680</text>
</g>
<rect x="4.5" y="734.5" width="1388" height="104" fill="none" stroke="#000" stroke-width="1" shape-rendering="crispEdges"/>
<path d="M1393 765.5 h4 M1393 786.5 h4 M1393 807.5 h4 M1393 828.5 h4" stroke="#c04040" stroke-width="1" shape-rendering="crispEdges"/>
<text x="1398" y="769.8" font-size="10.8" fill="#000" stroke="#000" stroke-width="0.25">1,000</text>
<text x="1398" y="790.8" font-size="10.8" fill="#000" stroke="#000" stroke-width="0.25">0,000</text>
<text x="1398" y="811.8" font-size="10.8" fill="#000" stroke="#000" stroke-width="0.25">-1,000</text>
<text x="1398" y="832.8" font-size="10.8" fill="#000" stroke="#000" stroke-width="0.25">-2,000</text>
<rect x="1395.5" y="817.0" width="38" height="12.0" fill="#fff" stroke="#c03030" stroke-width="1" shape-rendering="crispEdges"/>
<text x="1398" y="826.8" font-size="10.8" fill="#101090" stroke="#101090" stroke-width="0.2">-1,680</text>
<rect x="1" y="3" width="1" height="1" fill="#c8ccd4"/>
<rect x="3" y="3" width="1" height="1" fill="#c8ccd4"/>
<rect x="5" y="3" width="1" height="1" fill="#c8ccd4"/>
<rect x="7" y="3" width="1" height="1" fill="#c8ccd4"/>
<rect x="9" y="3" width="1" height="1" fill="#c8ccd4"/>
<rect x="11" y="3" width="1" height="1" fill="#c8ccd4"/>
<rect x="13" y="3" width="1" height="1" fill="#c8ccd4"/>
<rect x="15" y="3" width="1" height="1" fill="#c8ccd4"/>
<rect x="1" y="5" width="1" height="1" fill="#c8ccd4"/>
<rect x="3" y="5" width="1" height="1" fill="#c8ccd4"/>
<rect x="5" y="5" width="1" height="1" fill="#c8ccd4"/>
<rect x="7" y="5" width="1" height="1" fill="#c8ccd4"/>
<rect x="9" y="5" width="1" height="1" fill="#c8ccd4"/>
<rect x="11" y="5" width="1" height="1" fill="#c8ccd4"/>
<rect x="13" y="5" width="1" height="1" fill="#c8ccd4"/>
<rect x="15" y="5" width="1" height="1" fill="#c8ccd4"/>
<rect x="1" y="7" width="1" height="1" fill="#c8ccd4"/>
<rect x="3" y="7" width="1" height="1" fill="#c8ccd4"/>
<rect x="5" y="7" width="1" height="1" fill="#c8ccd4"/>
<rect x="7" y="7" width="1" height="1" fill="#c8ccd4"/>
<rect x="9" y="7" width="1" height="1" fill="#c8ccd4"/>
<rect x="11" y="7" width="1" height="1" fill="#c8ccd4"/>
<rect x="1" y="9" width="1" height="1" fill="#c8ccd4"/>
<rect x="3" y="9" width="1" height="1" fill="#c8ccd4"/>
<g>
<rect x="1343.5" y="-3" width="94" height="19.5" rx="3" fill="none" stroke="#8d96a3" stroke-width="1"/>
<defs><linearGradient id="wb" x1="0" y1="0" x2="0" y2="1"><stop offset="0" stop-color="#8a96a6"/><stop offset="0.45" stop-color="#5e6b7d"/><stop offset="0.5" stop-color="#1a2636"/><stop offset="1" stop-color="#34455a"/></linearGradient><linearGradient id="wc" x1="0" y1="0" x2="0" y2="1"><stop offset="0" stop-color="#d89488"/><stop offset="0.45" stop-color="#c46050"/><stop offset="0.5" stop-color="#b02a12"/><stop offset="1" stop-color="#d06a4a"/></linearGradient><linearGradient id="tb" x1="0" y1="0" x2="0" y2="1"><stop offset="0" stop-color="#6a6e74"/><stop offset="0.06" stop-color="#4a4e54"/><stop offset="0.45" stop-color="#2c2f33"/><stop offset="0.5" stop-color="#0d0e10"/><stop offset="1" stop-color="#060708"/></linearGradient><linearGradient id="btn" x1="0" y1="0" x2="0" y2="1"><stop offset="0" stop-color="#6d7075"/><stop offset="0.48" stop-color="#3e4146"/><stop offset="0.52" stop-color="#111215"/><stop offset="1" stop-color="#0c0d0f"/></linearGradient><linearGradient id="btna" x1="0" y1="0" x2="0" y2="1"><stop offset="0" stop-color="#2a2c30"/><stop offset="0.5" stop-color="#141518"/><stop offset="1" stop-color="#08090a"/></linearGradient><radialGradient id="orb" cx="0.5" cy="0.45" r="0.55"><stop offset="0" stop-color="#3a7fb8"/><stop offset="0.7" stop-color="#1b4a78"/><stop offset="1" stop-color="#0c2440"/></radialGradient><radialGradient id="gdot" cx="0.4" cy="0.35" r="0.6"><stop offset="0" stop-color="#7fe0a0"/><stop offset="1" stop-color="#1f9a50"/></radialGradient></defs>
<rect x="1344" y="-2" width="25" height="18" rx="2" fill="url(#wb)" stroke="#c0c8d2" stroke-width="0.8"/>
<rect x="1370" y="-2" width="24" height="18" rx="2" fill="url(#wb)" stroke="#c0c8d2" stroke-width="0.8"/>
<rect x="1395" y="-2" width="42" height="18" rx="2" fill="url(#wc)" stroke="#e0b0a8" stroke-width="0.8"/>
<rect x="1352" y="8" width="10" height="3" fill="#e8eef6"/>
<rect x="1377.5" y="3.5" width="6" height="6" fill="none" stroke="#e8eef6" stroke-width="1.6"/><path d="M1379 2.5 h6 v6" fill="none" stroke="#e8eef6" stroke-width="1"/>
<path d="M1411.5 3 L1419 10.5 M1419 3 L1411.5 10.5" stroke="#f4f8f8" stroke-width="2.6"/>
</g>
<rect x="4" y="43" width="2" height="2" fill="#c4c4c4"/>
<rect x="4" y="46" width="2" height="2" fill="#c4c4c4"/>
<rect x="4" y="49" width="2" height="2" fill="#c4c4c4"/>
<rect x="4" y="52" width="2" height="2" fill="#c4c4c4"/>
<rect x="4" y="55" width="2" height="2" fill="#c4c4c4"/>
<rect x="4" y="58" width="2" height="2" fill="#c4c4c4"/>
<rect x="12.5" y="43.5" width="20" height="18" rx="2.5" fill="#e4e4e4" stroke="#5a5a5a" stroke-width="1.2"/>
<path d="M16.5 58.5 H29" stroke="#5f7fae" stroke-width="1"/><path d="M28.5 47 V58" stroke="#5f7fae" stroke-width="1"/>
<path d="M16.5 49 V60 M20.5 44.5 V52 M24.5 45.5 V56 M28.5 47 V57" stroke="#333" stroke-width="0.8"/>
<rect x="15" y="52" width="3" height="6" fill="#1f8040"/><rect x="19" y="45.5" width="3" height="5" fill="#b02030"/><rect x="23" y="46.5" width="3" height="8" fill="#b02030"/><rect x="27" y="49" width="3" height="5" fill="#1f8040"/>
<rect x="37.5" y="45.5" width="12" height="13" fill="#e4ecf8" stroke="#9fb2cc" stroke-width="1"/>
<path d="M39 50 V61 M37 56 h2 M39 54 h2 M43 45 V54 M41 48 h2 M43 51 h2 M47 46 V58 M45 49 h2 M47 55 h2" stroke="#4260a0" stroke-width="1.6"/>
<rect x="57.5" y="45.5" width="13" height="13" fill="#e4ecf8" stroke="#9fb2cc" stroke-width="1"/>
<path d="M56.5 53 L61 50 L65 54.5 L71.5 48" fill="none" stroke="#222" stroke-width="0.9"/>
<rect x="84.5" y="45.5" width="13" height="13" fill="#e2eaf8" stroke="#8597b4" stroke-width="1"/>
<text x="91.3" y="56" font-size="10.5" font-weight="bold" fill="#3a4e80" stroke="#3a4e80" stroke-width="0.6" text-anchor="middle" letter-spacing="-0.6">T</text>
<rect x="105.5" y="45.5" width="13" height="13" fill="#e2eaf8" stroke="#8597b4" stroke-width="1"/>
<text x="112.3" y="56" font-size="10.5" font-weight="bold" fill="#3a4e80" stroke="#3a4e80" stroke-width="0.6" text-anchor="middle" letter-spacing="-0.6">1</text>
<rect x="126.5" y="45.5" width="13" height="13" fill="#e2eaf8" stroke="#8597b4" stroke-width="1"/>
<text x="133.3" y="56" font-size="10.5" font-weight="bold" fill="#3a4e80" stroke="#3a4e80" stroke-width="0.6" text-anchor="middle" letter-spacing="-0.6">5</text>
<rect x="147.5" y="45.5" width="13" height="13" fill="#e2eaf8" stroke="#8597b4" stroke-width="1"/>
<text x="154.3" y="56" font-size="10" font-weight="bold" fill="#3a4e80" stroke="#3a4e80" stroke-width="0.6" text-anchor="middle" letter-spacing="-0.6">10</text>
<rect x="168.5" y="45.5" width="13" height="13" fill="#e2eaf8" stroke="#8597b4" stroke-width="1"/>
<text x="175.3" y="56" font-size="10" font-weight="bold" fill="#3a4e80" stroke="#3a4e80" stroke-width="0.6" text-anchor="middle" letter-spacing="-0.6">15</text>
<rect x="189.5" y="45.5" width="13" height="13" fill="#e2eaf8" stroke="#8597b4" stroke-width="1"/>
<text x="196.3" y="56" font-size="10" font-weight="bold" fill="#3a4e80" stroke="#3a4e80" stroke-width="0.6" text-anchor="middle" letter-spacing="-0.6">30</text>
<rect x="210.5" y="45.5" width="13" height="13" fill="#e2eaf8" stroke="#8597b4" stroke-width="1"/>
<text x="217.3" y="56" font-size="10" font-weight="bold" fill="#3a4e80" stroke="#3a4e80" stroke-width="0.6" text-anchor="middle" letter-spacing="-0.6">1H</text>
<rect x="231.5" y="45.5" width="13" height="13" fill="#e2eaf8" stroke="#8597b4" stroke-width="1"/>
<text x="238.3" y="56" font-size="10" font-weight="bold" fill="#3a4e80" stroke="#3a4e80" stroke-width="0.6" text-anchor="middle" letter-spacing="-0.6">2H</text>
<rect x="249.5" y="43.5" width="20" height="18" rx="2.5" fill="#e4e4e4" stroke="#5a5a5a" stroke-width="1.2"/>
<rect x="253.0" y="45.5" width="13" height="13" fill="#e2eaf8" stroke="#8597b4" stroke-width="1"/>
<text x="259.8" y="56" font-size="10" font-weight="bold" fill="#3a4e80" stroke="#3a4e80" stroke-width="0.6" text-anchor="middle" letter-spacing="-0.6">4H</text>
<rect x="273.5" y="45.5" width="13" height="13" fill="#e2eaf8" stroke="#8597b4" stroke-width="1"/>
<text x="280.3" y="56" font-size="10" font-weight="bold" fill="#3a4e80" stroke="#3a4e80" stroke-width="0.6" text-anchor="middle" letter-spacing="-0.6">8H</text>
<rect x="294.5" y="45.5" width="13" height="13" fill="#e2eaf8" stroke="#8597b4" stroke-width="1"/>
<text x="301.3" y="56" font-size="10.5" font-weight="bold" fill="#3a4e80" stroke="#3a4e80" stroke-width="0.6" text-anchor="middle" letter-spacing="-0.6">D</text>
<rect x="315.5" y="45.5" width="13" height="13" fill="#e2eaf8" stroke="#8597b4" stroke-width="1"/>
<text x="322.3" y="56" font-size="10.5" font-weight="bold" fill="#3a4e80" stroke="#3a4e80" stroke-width="0.6" text-anchor="middle" letter-spacing="-0.6">W</text>
<rect x="336.5" y="45.5" width="13" height="13" fill="#e2eaf8" stroke="#8597b4" stroke-width="1"/>
<text x="343.3" y="56" font-size="10.5" font-weight="bold" fill="#3a4e80" stroke="#3a4e80" stroke-width="0.6" text-anchor="middle" letter-spacing="-0.6">M</text>
<path d="M362 51.5 H377 M369.5 44 V59" stroke="#111" stroke-width="1.1"/>
<path d="M387 44.5 L385.5 59.5 M393.5 44.5 L392 59.5 M383 49.5 H398.5 M382.5 54.5 H398" stroke="#1e4aa0" stroke-width="2"/>
<ellipse cx="412" cy="51" rx="5.5" ry="5" fill="#f2f2fa" stroke="#a8a8b8" stroke-width="1"/><path d="M410 55.5 L411 58.5 L414 55.5" fill="#f2f2fa" stroke="#a8a8b8" stroke-width="0.8"/><rect x="411.2" y="49.5" width="1.6" height="4" fill="#3030a0"/><rect x="411.2" y="47" width="1.6" height="1.5" fill="#3030a0"/>
<path d="M428 45 V59" stroke="#3d5aa0" stroke-width="2.6"/><path d="M432 47 h4 M432 49.5 h4 M434 45.5 v5" stroke="#3d5aa0" stroke-width="1.2"/><path d="M430 53.5 H441" stroke="#3d5aa0" stroke-width="1.2" stroke-dasharray="1.2,1.2"/>
<path d="M446 60 V50 L448 50 L448 47 L451 47 L451 53 L453 53 L453 44.5 L455 44.5 L455 51 L458 51 L458 48 L462 48 V60 Z" fill="#8e8e8e"/>
<path d="M477.0 45 V60 M485.0 44 V56" stroke="#4462a8" stroke-width="3.5"/>
<path d="M474.0 49 h3 M477.0 53 h3 M484.0 47 h3 M487.0 51 h3" stroke="#4462a8" stroke-width="1.6"/>
<path d="M476 59 L488 46" stroke="#1a1a2a" stroke-width="1.1"/>
<path d="M498.0 45 V60 M506.0 44 V56" stroke="#4462a8" stroke-width="3.5"/>
<path d="M495.0 49 h3 M498.0 53 h3 M505.0 47 h3 M508.0 51 h3" stroke="#4462a8" stroke-width="1.6"/>
<path d="M495 45 L510 59" stroke="#1a1a2a" stroke-width="1.1"/>
<path d="M519.0 45 V60 M527.0 44 V56" stroke="#4462a8" stroke-width="3.5"/>
<path d="M516.0 49 h3 M519.0 53 h3 M526.0 47 h3 M529.0 51 h3" stroke="#4462a8" stroke-width="1.6"/>
<path d="M516 51 H531" stroke="#1a1a2a" stroke-width="1.1"/>
<path d="M540.0 45 V60 M548.0 44 V56" stroke="#4462a8" stroke-width="3.5"/>
<path d="M537.0 49 h3 M540.0 53 h3 M547.0 47 h3 M550.0 51 h3" stroke="#4462a8" stroke-width="1.6"/>
<path d="M537 48 L552 60" stroke="#1a1a2a" stroke-width="1.1"/>
<path d="M567.0 45 V60 M575.0 44 V56" stroke="#4462a8" stroke-width="3.5"/>
<path d="M564.0 49 h3 M567.0 53 h3 M574.0 47 h3 M577.0 51 h3" stroke="#4462a8" stroke-width="1.6"/>
<path d="M564 55 L578 45" stroke="#1a1a2a" stroke-width="1"/><path d="M566 60 L579 46" stroke="#c02040" stroke-width="1.4"/>
<path d="M586.5 46.5 L597 57.5 M597 46.5 L586.5 57.5" stroke="#d42040" stroke-width="1.8"/>
<path d="M607.5 47.5 L618.5 58 M618.5 47.5 L607.5 58" stroke="#283c80" stroke-width="4.8" stroke-linecap="square"/><path d="M607.5 47.5 L618.5 58 M618.5 47.5 L607.5 58" stroke="#e03848" stroke-width="2.8" stroke-linecap="square"/>
<rect x="636.5" y="44.5" width="8" height="5" fill="#fff" stroke="#333" stroke-width="1"/><rect x="632.5" y="49.5" width="15" height="7" rx="2" fill="#c8cccc" stroke="#444" stroke-width="1"/><rect x="635.5" y="55.5" width="9" height="4.5" fill="#fff" stroke="#333" stroke-width="1"/>
<path d="M653.5 44.5 H661 L664.5 48 V59.5 H653.5 Z" fill="#fff" stroke="#222" stroke-width="1"/><circle cx="661.5" cy="53" r="3.3" fill="#a8c8f0" stroke="#3a5a90" stroke-width="1"/><path d="M664 55.5 L667.5 58.5" stroke="#333" stroke-width="1.5"/>
<path d="M689 54 L695 59.5" stroke="#5a3a2a" stroke-width="2.2"/>
<circle cx="686" cy="50" r="5.5" fill="#8cc0f4" stroke="#1a50a0" stroke-width="1.2"/>
<path d="M682 50 h7 M686.0 46.5 v7" stroke="#0a2a70" stroke-width="1.8"/>
<path d="M710 54 L716 59.5" stroke="#5a3a2a" stroke-width="2.2"/>
<circle cx="707" cy="50" r="5.5" fill="#8cc0f4" stroke="#1a50a0" stroke-width="1.2"/>
<path d="M703 50 h7" stroke="#0a2a70" stroke-width="1.8"/>
<path d="M722 44.5 H738 M722 59.5 H738" stroke="#b0b0b0" stroke-width="1"/><circle cx="730" cy="51" r="6" fill="#aaaaaa"/><path d="M732 56 L737 59" stroke="#a0a0a0" stroke-width="1.5"/>
<rect x="1418.5" y="43.5" width="20" height="18" rx="2.5" fill="#e2e2e2" stroke="#505050" stroke-width="1.1"/>
<path d="M1422 51.5 H1428 M1425.5 47 V57.5 M1428.5 50 V55 M1430.5 49 V55 M1432.5 49.5 V55 M1428 55 H1433" stroke="#111" stroke-width="1.1"/>
<circle cx="9" cy="857" r="7" fill="url(#gdot)" stroke="#2a7a4a" stroke-width="0.8"/>
<path d="M20.5 848 V866 M207.5 848 V866" stroke="#b8b8b8" stroke-width="1"/>
<circle cx="33" cy="854" r="4" fill="none" stroke="#888" stroke-width="1.2"/><path d="M30 857 L25 862" stroke="#888" stroke-width="1.6"/>
<rect x="39.5" y="846.5" width="149" height="21" fill="#fff" stroke="#c4c4c4" stroke-width="1"/>
<text x="40.5" y="861.5" font-size="10.8" fill="#a8a8a8">Type instrument name</text>
<text x="213" y="862.6" font-size="12" font-weight="bold" fill="#111">12 Jul 2011 12:36:44 MESZ</text>
<rect x="0" y="870" width="1440" height="30" fill="url(#tb)"/>
<path d="M0 870.5 H1440" stroke="#9ea2a8" stroke-width="1" opacity="0.7"/>
<defs><linearGradient id="orbg" x1="0" y1="0" x2="0" y2="1"><stop offset="0" stop-color="#a8c0d8"/><stop offset="0.35" stop-color="#4f86b4"/><stop offset="0.6" stop-color="#1d5c9a"/><stop offset="1" stop-color="#14b0ec"/></linearGradient></defs>
<circle cx="30.3" cy="887" r="20.2" fill="#0c1620"/><circle cx="30.3" cy="887" r="18.4" fill="url(#orbg)" stroke="#6a8fb0" stroke-width="0.8"/>
<path d="M20 879.5 Q24 876 31 879.8 L29.5 886 Q24 883 18.5 885.5 Z" fill="#e8602a"/>
<path d="M31 879.8 Q36 882.5 41 880.5 L39.5 887 Q34.5 888.5 29.5 886 Z" fill="#6cc23a"/>
<path d="M18.5 885.5 Q24 883 29.5 886 L28 892 Q23 889.5 17 891.5 Z" fill="#3aa0e8"/>
<path d="M29.5 886 Q34.5 888.5 39.5 887 L38 893 Q33 894.5 28 892 Z" fill="#f4c020"/>
<path d="M18.5 885.5 Q24 883 29.5 886 Q34.5 888.5 39.5 887 M31 879.8 L28 892" fill="none" stroke="#102030" stroke-width="0.9"/>
<ellipse cx="30" cy="875" rx="11" ry="5" fill="#fff" opacity="0.2"/>
<rect x="66" y="876" width="12" height="16" fill="#e8d890" stroke="#a89850" stroke-width="0.8"/><rect x="70" y="874" width="8" height="18" fill="#f4e8a8"/>
<rect x="88" y="879" width="16" height="12" fill="#4a78c8" stroke="#c8d8f0" stroke-width="1"/>
<g transform="translate(119.0 884.5)"><path d="M-5.5 0.5 H5.5 A5.8 5.8 0 1 0 3.8 4.8" fill="none" stroke="#2a86d8" stroke-width="2.6"/><ellipse cx="0" cy="0" rx="8.5" ry="3.2" transform="rotate(-35)" fill="none" stroke="#e8a828" stroke-width="1.3"/></g>
<text x="144" y="884" font-size="13" font-weight="bold" fill="#fff">»</text>
<rect x="162.5" y="872.5" width="155" height="25" rx="2.5" fill="url(#btn)" stroke="#5e6166" stroke-width="1"/>
<path d="M165.0 873.5 H315.0" stroke="#9a9da2" stroke-width="1" opacity="0.6"/>
<g transform="translate(178.0 885)"><path d="M-5.5 0.5 H5.5 A5.8 5.8 0 1 0 3.8 4.8" fill="none" stroke="#2a86d8" stroke-width="2.6"/><ellipse cx="0" cy="0" rx="8.5" ry="3.2" transform="rotate(-35)" fill="none" stroke="#e8a828" stroke-width="1.3"/></g>
<text x="190.4" y="889.6" font-size="12" fill="#fff" textLength="113.5" lengthAdjust="spacingAndGlyphs">flatex - Windows Int...</text>
<rect x="322.5" y="872.5" width="155" height="25" rx="2.5" fill="url(#btn)" stroke="#5e6166" stroke-width="1"/>
<path d="M325.0 873.5 H475.0" stroke="#9a9da2" stroke-width="1" opacity="0.6"/>
<g transform="translate(338.0 885)"><path d="M-5.5 0.5 H5.5 A5.8 5.8 0 1 0 3.8 4.8" fill="none" stroke="#2a86d8" stroke-width="2.6"/><ellipse cx="0" cy="0" rx="8.5" ry="3.2" transform="rotate(-35)" fill="none" stroke="#e8a828" stroke-width="1.3"/></g>
<text x="349.8" y="889.6" font-size="12" fill="#fff" textLength="114.7" lengthAdjust="spacingAndGlyphs">Silber (ISIN XC00096...</text>
<rect x="482.5" y="872.5" width="155" height="25" rx="2.5" fill="url(#btna)" stroke="#5e6166" stroke-width="1"/>
<path d="M485.0 873.5 H635.0" stroke="#9a9da2" stroke-width="1" opacity="0.6"/>
<rect x="491" y="879" width="1" height="1" fill="#a0a0a0" opacity="1.00"/>
<rect x="493" y="879" width="1" height="1" fill="#a0a0a0" opacity="1.00"/>
<rect x="495" y="879" width="1" height="1" fill="#a0a0a0" opacity="1.00"/>
<rect x="497" y="879" width="1" height="1" fill="#a0a0a0" opacity="1.00"/>
<rect x="499" y="879" width="1" height="1" fill="#a0a0a0" opacity="1.00"/>
<rect x="501" y="879" width="1" height="1" fill="#a0a0a0" opacity="1.00"/>
<rect x="503" y="879" width="1" height="1" fill="#a0a0a0" opacity="1.00"/>
<rect x="505" y="879" width="1" height="1" fill="#a0a0a0" opacity="1.00"/>
<rect x="491" y="881" width="1" height="1" fill="#a0a0a0" opacity="0.90"/>
<rect x="493" y="881" width="1" height="1" fill="#a0a0a0" opacity="0.90"/>
<rect x="495" y="881" width="1" height="1" fill="#a0a0a0" opacity="0.90"/>
<rect x="497" y="881" width="1" height="1" fill="#a0a0a0" opacity="0.90"/>
<rect x="499" y="881" width="1" height="1" fill="#a0a0a0" opacity="0.90"/>
<rect x="501" y="881" width="1" height="1" fill="#a0a0a0" opacity="0.90"/>
<rect x="503" y="881" width="1" height="1" fill="#a0a0a0" opacity="0.90"/>
<rect x="505" y="881" width="1" height="1" fill="#a0a0a0" opacity="0.90"/>
<rect x="491" y="883" width="1" height="1" fill="#a0a0a0" opacity="0.80"/>
<rect x="493" y="883" width="1" height="1" fill="#a0a0a0" opacity="0.80"/>
<rect x="495" y="883" width="1" height="1" fill="#a0a0a0" opacity="0.80"/>
<rect x="497" y="883" width="1" height="1" fill="#a0a0a0" opacity="0.80"/>
<rect x="499" y="883" width="1" height="1" fill="#a0a0a0" opacity="0.80"/>
<rect x="501" y="883" width="1" height="1" fill="#a0a0a0" opacity="0.80"/>
<rect x="503" y="883" width="1" height="1" fill="#a0a0a0" opacity="0.80"/>
<rect x="505" y="883" width="1" height="1" fill="#a0a0a0" opacity="0.80"/>
<rect x="491" y="885" width="1" height="1" fill="#a0a0a0" opacity="0.70"/>
<rect x="493" y="885" width="1" height="1" fill="#a0a0a0" opacity="0.70"/>
<rect x="495" y="885" width="1" height="1" fill="#a0a0a0" opacity="0.70"/>
<rect x="497" y="885" width="1" height="1" fill="#a0a0a0" opacity="0.70"/>
<rect x="499" y="885" width="1" height="1" fill="#a0a0a0" opacity="0.70"/>
<rect x="501" y="885" width="1" height="1" fill="#a0a0a0" opacity="0.70"/>
<rect x="503" y="885" width="1" height="1" fill="#a0a0a0" opacity="0.70"/>
<rect x="505" y="885" width="1" height="1" fill="#a0a0a0" opacity="0.70"/>
<rect x="491" y="887" width="1" height="1" fill="#a0a0a0" opacity="0.60"/>
<rect x="493" y="887" width="1" height="1" fill="#a0a0a0" opacity="0.60"/>
<rect x="495" y="887" width="1" height="1" fill="#a0a0a0" opacity="0.60"/>
<rect x="497" y="887" width="1" height="1" fill="#a0a0a0" opacity="0.60"/>
<rect x="491" y="889" width="1" height="1" fill="#a0a0a0" opacity="0.50"/>
<rect x="493" y="889" width="1" height="1" fill="#a0a0a0" opacity="0.50"/>
<rect x="495" y="889" width="1" height="1" fill="#a0a0a0" opacity="0.50"/>
<rect x="497" y="889" width="1" height="1" fill="#a0a0a0" opacity="0.50"/>
<rect x="491" y="891" width="1" height="1" fill="#a0a0a0" opacity="0.40"/>
<rect x="493" y="891" width="1" height="1" fill="#a0a0a0" opacity="0.40"/>
<rect x="495" y="891" width="1" height="1" fill="#a0a0a0" opacity="0.40"/>
<rect x="497" y="891" width="1" height="1" fill="#a0a0a0" opacity="0.40"/>
<text x="511.5" y="889.6" font-size="12" fill="#fff" textLength="69.0" lengthAdjust="spacingAndGlyphs">FinanceChart</text>
<rect x="642.5" y="872.5" width="155" height="25" rx="2.5" fill="url(#btn)" stroke="#5e6166" stroke-width="1"/>
<path d="M645.0 873.5 H795.0" stroke="#9a9da2" stroke-width="1" opacity="0.6"/>
<rect x="652" y="878" width="14" height="15" fill="#e8eef6" stroke="#90a4c0" stroke-width="0.8"/><rect x="653" y="879" width="12" height="3" fill="#6a90c8"/><path d="M653 884 h12 M653 887 h12 M653 890 h12 M656 883 v9 M659 883 v9 M662 883 v9" stroke="#a0b0c8" stroke-width="0.7"/>
<text x="669.8" y="889.6" font-size="12" fill="#fff" textLength="43.0" lengthAdjust="spacingAndGlyphs">Rechner</text>
<rect x="802.5" y="872.5" width="155" height="25" rx="2.5" fill="url(#btn)" stroke="#5e6166" stroke-width="1"/>
<path d="M805.0 873.5 H955.0" stroke="#9a9da2" stroke-width="1" opacity="0.6"/>
<path d="M814 878 L818 893 M822 879 L819 893" stroke="#d02020" stroke-width="2"/><circle cx="821" cy="877" r="2.5" fill="#f0b040"/>
<text x="830.4" y="889.6" font-size="12" fill="#fff" textLength="96.3" lengthAdjust="spacingAndGlyphs">Unbenannt - Paint</text>
<path d="M1305 880 L1301.5 884 L1305 888" fill="none" stroke="#e0e0e0" stroke-width="1.8"/>
<rect x="1313" y="878" width="15" height="10" rx="2" fill="#e8ecf0" stroke="#9aa4b8" stroke-width="0.8"/><rect x="1315" y="882" width="11" height="2" fill="#777"/>
<rect x="1345.5" y="876.5" width="8" height="14" rx="1.5" fill="#a0e8a8" stroke="#e8e8e8" stroke-width="1"/>
<rect x="1360.5" y="876.5" width="9" height="8" fill="#555" stroke="#ddd" stroke-width="1"/><rect x="1364.5" y="880.5" width="9" height="8" fill="#444" stroke="#ddd" stroke-width="1"/><path d="M1367 884 L1374 891 M1374 884 L1367 891" stroke="#e02020" stroke-width="1.8"/>
<path d="M1378 881 H1381 L1385 877 V891 L1381 887 H1378 Z" fill="#e0e0e8"/><path d="M1387 881 Q1389 884 1387 887 M1389.5 879 Q1392 884 1389.5 889" fill="none" stroke="#60c060" stroke-width="1"/>
<text x="1399.5" y="889" font-size="12.5" fill="#fff">12:36</text>
</svg>
</body></html>
